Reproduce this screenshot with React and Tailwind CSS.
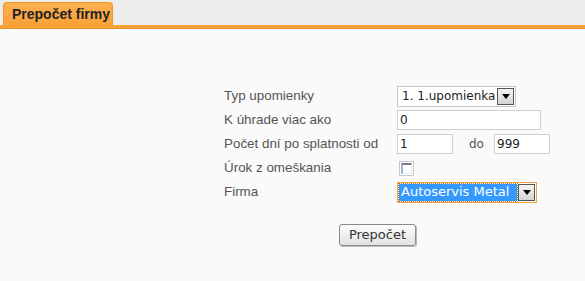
import React from 'react'

const label = "h-6 flex items-center text-[13.4px] text-[#555]"
const ui = { fontFamily: 'Tahoma, "DejaVu Sans", sans-serif' }

function Arrow() {
  return (
    <div className="w-[17px] h-[17px] border border-[#555] bg-gradient-to-b from-[#f4f4f4] to-[#d4d4d4] flex items-center justify-center shrink-0">
      <svg width="8" height="5" viewBox="0 0 8 5"><path d="M0 0h8L4 5z" fill="#000" /></svg>
    </div>
  )
}

export default function App() {
  return (
    <div className="w-[585px] h-[281px] bg-[#fafafa] overflow-hidden" style={{ fontFamily: '"Liberation Sans", Arial, sans-serif' }}>
      {/* Tab bar */}
      <div className="h-[25px] bg-[#ececec] flex items-end pl-[3px]">
        <div className="h-[23px] w-[110px] rounded-t-[4px] bg-gradient-to-b from-[#fbb04f] to-[#f9a13a] border border-b-0 border-[#f0952c] flex items-center pl-[8px] text-[14px] font-bold text-[#222]">
          Prepočet firmy
        </div>
      </div>
      <div className="h-[4px] bg-[#f7a139] border-b border-[#e88e2a]" />

      {/* Form */}
      <div className="pt-[55px] pl-[224px]">
        <div className="flex">
          <div className="w-[173px] flex flex-col">
            <div className={label}>Typ upomienky</div>
            <div className={label}>K úhrade viac ako</div>
            <div className={label}>Počet dní po splatnosti od</div>
            <div className={label}>Úrok z omeškania</div>
            <div className={label}>Firma</div>
          </div>
          <div className="flex flex-col text-[12px] text-[#222]" style={ui}>
            <div className="h-6 flex items-center">
              <div className="w-[119px] h-[21px] border border-[#c8c8c8] bg-white flex items-center justify-between pl-[4px] pr-[1px]">
                <span>1. 1.upomienka</span>
                <Arrow />
              </div>
            </div>
            <div className="h-6 flex items-center">
              <div className="w-[144px] h-[20px] border border-[#cfcfcf] bg-white flex items-center pl-[2px]">0</div>
            </div>
            <div className="h-6 flex items-center">
              <div className="w-[56px] h-[20px] border border-[#cfcfcf] bg-white flex items-center pl-[2px]">1</div>
              <span className="ml-[16px] w-[25px] text-[#555]">do</span>
              <div className="w-[56px] h-[20px] border border-[#cfcfcf] bg-white flex items-center pl-[2px]">999</div>
            </div>
            <div className="h-6 flex items-center pl-[2px]">
              <div className="w-[15px] h-[15px] border border-[#c8c8c8] bg-white p-[1px]">
                <div className="w-full h-full border-t-2 border-l-2 border-t-[#808080] border-l-[#9bb6d8] border-r border-b border-r-[#e8e8e8] border-b-[#e8e8e8]" />
              </div>
            </div>
            <div className="h-6 flex items-center">
              <div className="w-[140px] h-[21px] border border-[#f5a23a] bg-white flex items-center justify-between px-[1px]">
                <span className="h-[17px] w-[118px] bg-[#3399ff] text-white outline-1 outline-dotted outline-[#c07a2a] flex items-center pl-[2px] text-[13px]">Autoservis Metal</span>
                <Arrow />
              </div>
            </div>
          </div>
        </div>
        <div className="pl-[115px] mt-[18px]">
          <button className="w-[77px] h-[22px] rounded-[3px] border border-[#8a8a8a] bg-gradient-to-b from-[#fdfdfd] to-[#e2e2e2] text-[13px] text-[#333] shadow-[1px_1px_0_#bbb]" style={ui}>
            Prepočet
          </button>
        </div>
      </div>
    </div>
  )
}
